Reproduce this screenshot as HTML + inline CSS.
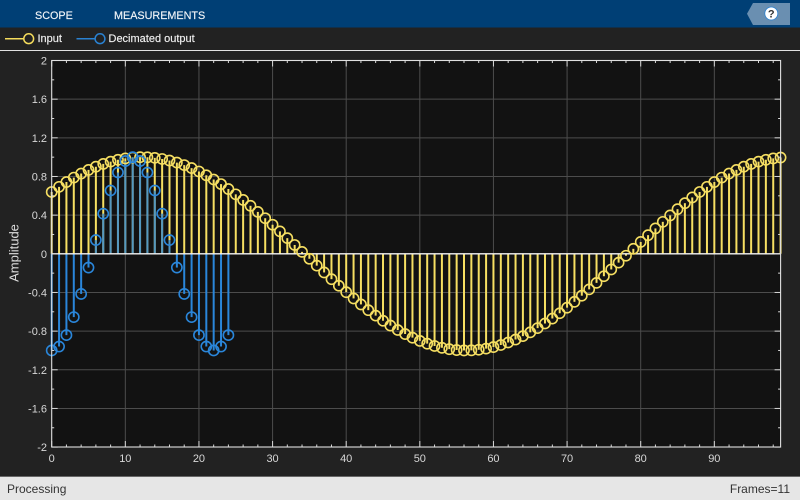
<!DOCTYPE html>
<html>
<head>
<meta charset="utf-8">
<style>
html,body{margin:0;padding:0;background:#222;}
body{width:800px;height:500px;overflow:hidden;position:relative;font-family:"Liberation Sans",sans-serif;}
svg{position:absolute;left:0;top:0;}
text{font-family:"Liberation Sans",sans-serif;}
</style>
</head>
<body>
<svg id="s" width="800" height="500" viewBox="0 0 800 500">
<rect x="0" y="0" width="800" height="500" fill="#222222"/>
<rect x="0" y="0" width="800" height="27.5" fill="#003f75"/>
<text x="35" y="19" font-size="10.8" fill="#f2f5f8" stroke="#f2f5f8" stroke-width="0.15">SCOPE</text>
<text x="114" y="19" font-size="10.8" fill="#f2f5f8" stroke="#f2f5f8" stroke-width="0.15">MEASUREMENTS</text>
<polygon points="753,3 790,3 790,25 753,25 747,13.8" fill="#6a8fb1"/>
<circle cx="771.3" cy="13.5" r="6.5" fill="#ffffff" stroke="#2a80d0" stroke-width="0.8"/>
<text x="771.3" y="17.6" font-size="11" font-weight="bold" text-anchor="middle" fill="#333333">?</text>
<rect x="0" y="50" width="800" height="1" fill="#e2e2e2"/>
<line x1="5" y1="38.7" x2="24" y2="38.7" stroke="#f5dc5c" stroke-width="1.5"/>
<circle cx="28.7" cy="38.7" r="4.9" fill="none" stroke="#f5dc5c" stroke-width="1.5"/>
<text x="37.5" y="42" font-size="11" fill="#f0f0f0" stroke="#f0f0f0" stroke-width="0.15">Input</text>
<line x1="76.5" y1="38.7" x2="95" y2="38.7" stroke="#2a82d2" stroke-width="1.5"/>
<circle cx="100" cy="38.7" r="4.9" fill="none" stroke="#2a82d2" stroke-width="1.5"/>
<text x="108.5" y="42" font-size="11" fill="#f0f0f0" stroke="#f0f0f0" stroke-width="0.15">Decimated output</text>
<rect x="51.7" y="60.5" width="729" height="386.5" fill="#121212"/>
<g id="plot"></g>
<text transform="translate(18.5,253) rotate(-90)" font-size="13" text-anchor="middle" fill="#dedede">Amplitude</text>
<rect x="0" y="476" width="800" height="1" fill="#666666"/>
<rect x="0" y="477" width="800" height="23" fill="#e6e6e6"/>
<text x="7" y="493" font-size="12" fill="#333333">Processing</text>
<text x="790" y="493" font-size="12" text-anchor="end" fill="#333333">Frames=11</text>
</svg>
<script>
(function(){
var g=document.getElementById('plot'),NS='http://www.w3.org/2000/svg';
var X0=51.7,XU=7.3625,Y0=253.8,YU=96.65,L=51.7,R=780.6,T=60.5,B=447;
function px(n){return X0+n*XU;}
function py(v){return Y0-v*YU;}
function el(n,a){var e=document.createElementNS(NS,n);for(var k in a)e.setAttribute(k,a[k]);g.appendChild(e);return e;}
function line(x1,y1,x2,y2,c,w,o){var a={x1:x1,y1:y1,x2:x2,y2:y2,stroke:c,'stroke-width':w};if(o)a['stroke-opacity']=o;return el('line',a);}
var i,x,y,v,t;
for(i=10;i<=90;i+=10){x=px(i);line(x,T,x,B,'#4c4c4c',1);}
for(v=-16;v<=16;v+=4){y=py(v/10);line(L,y,R,y,'#4c4c4c',1);}
var yel='#f6df62',blu='#2a86da';
var inp=[];
for(i=0;i<100;i++){inp.push(Math.sin(2*Math.PI*i/88+0.694));}
for(i=0;i<100;i++){x=px(i);line(x,Y0,x,py(inp[i]),yel,2);}
var dec=[];
for(i=0;i<25;i++){dec.push(-Math.cos(2*Math.PI*i/22));}
for(i=0;i<25;i++){x=px(i);line(x,Y0,x,py(dec[i]),blu,2,dec[i]>0?0.8:1);}
line(L,Y0,R,Y0,'#f2f2f2',1.3);
for(i=0;i<100;i++){el('circle',{cx:px(i),cy:py(inp[i]),r:5.1,fill:'none',stroke:yel,'stroke-width':1.6});}
for(i=0;i<25;i++){el('circle',{cx:px(i),cy:py(dec[i]),r:5.1,fill:'none',stroke:blu,'stroke-width':1.6});}
for(i=0;i<=98;i+=2){
 x=px(i);var m=(i%10==0)?6:2.5;
 line(x,T,x,T+m,'#d8d8d8',1);line(x,B,x,B-m,'#d8d8d8',1);
}
for(v=-20;v<=20;v+=2){
 y=py(v/10);var mj=(v%4==0)?6:2.5;
 line(L,y,L+mj,y,'#d8d8d8',1);line(R,y,R-mj,y,'#d8d8d8',1);
}
el('rect',{x:L,y:T,width:R-L,height:B-T,fill:'none',stroke:'#e0e0e0','stroke-width':1.1});
function tx(x,y,s,a){var e=el('text',{x:x,y:y,'font-size':11,fill:'#d8d8d8','text-anchor':a});e.textContent=s;}
for(i=0;i<=90;i+=10){tx(px(i),462,String(i),'middle');}
var labs=['2','1.6','1.2','0.8','0.4','0','-0.4','-0.8','-1.2','-1.6','-2'];
for(i=0;i<labs.length;i++){tx(47,py(2-0.4*i)+4,labs[i],'end');}
})();
</script>
</body>
</html>
